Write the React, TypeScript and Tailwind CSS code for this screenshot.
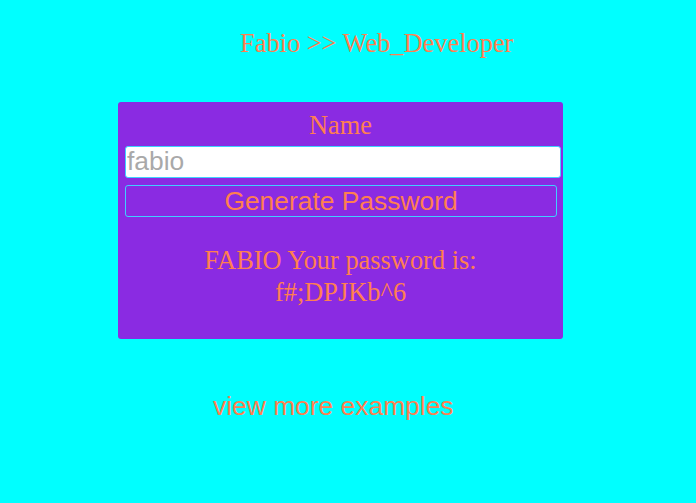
import React, { useState } from 'react';

const serif = "font-['Liberation_Serif','Times_New_Roman',serif]";
const sans = "font-['Liberation_Sans',Arial,sans-serif]";

const App: React.FC = () => {
  const [name, setName] = useState('fabio');
  const [password] = useState('f#;DPJKb^6');

  return (
    <div className="min-h-[503px] w-full bg-[#00ffff] overflow-hidden">
      <h1 className={`${serif} pt-[28px] pl-[240px] text-[26.4px] leading-[30px] font-normal text-[#ff7f50] whitespace-nowrap`}>
        Fabio &gt;&gt; Web_Developer
      </h1>

      <div className="mt-[44px] ml-[118px] w-[445px] h-[237px] bg-[#8a2be2] rounded-[3px] pt-[8px] px-[7px]">
        <div className={`${serif} text-center text-[26.4px] leading-[30px] text-[#ff7f50]`}>Name</div>
        <input
          className={`${sans} mt-[6px] block w-[436px] h-[32px] bg-white border border-[#3fd0ff] rounded-[3px] px-[1px] text-[26.4px] text-[#a9a9a9] outline-none`}
          value={name}
          onChange={e => setName(e.target.value)}
        />
        <button
          className={`${sans} mt-[7px] block w-[432px] h-[32px] border border-[#3fd0ff] rounded-[3px] bg-transparent text-[26.4px] leading-[30px] text-[#ff7f50]`}
        >
          Generate Password
        </button>
        <div className={`${serif} mt-[27px] text-center text-[26.4px] leading-[32px] text-[#ff7f50]`}>
          <div>{name.toUpperCase()} Your password is:</div>
          <div>{password}</div>
        </div>
      </div>

      <div className={`${sans} mt-[52px] pl-[213px] text-[26.4px] leading-[30px] text-[#ff7f50] whitespace-nowrap`}>
        view more examples
      </div>
    </div>
  );
};

export default App;
